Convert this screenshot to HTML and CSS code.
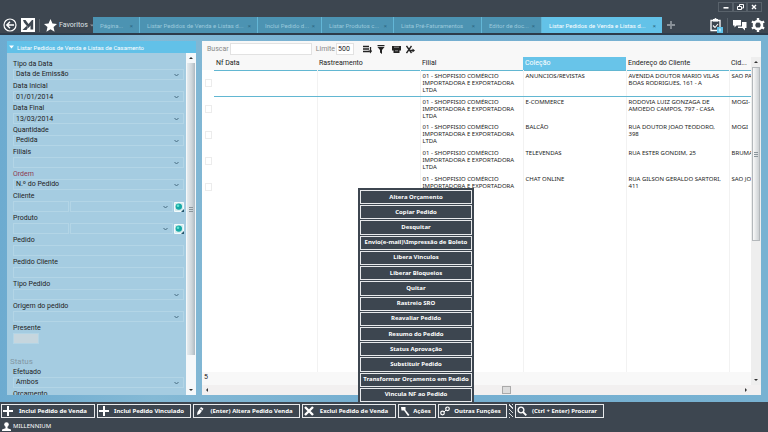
FILE: index.html
```
<!DOCTYPE html>
<html lang="pt-BR">
<head>
  <meta charset="UTF-8">
  <meta name="viewport" content="width=device-width, initial-scale=1.0">
  <title>Millennium</title>
  <link rel="stylesheet" href="styles.css">
</head>
<body>

<div class="titlebar">
  <button type="button" aria-label="Minimizar"><svg viewBox="0 0 14 8"><path d="M4.5 4.8h5" stroke-width="1.6"/></svg></button>
  <button type="button" aria-label="Restaurar"><svg viewBox="0 0 14 8"><path d="M6.5 3V1.5h4v3.500h-1.500M4.500 3.500h4v3h-4z" stroke-width="1"/></svg></button>
  <button type="button" aria-label="Fechar"><svg viewBox="0 0 14 8"><path d="M5 2l4 4M9 2L5 6" stroke-width="1.4"/></svg></button>
</div>

<header class="topbar">
  <button type="button" class="icon-btn" aria-label="Voltar">
    <svg width="14" height="14" viewBox="0 0 14 14"><circle cx="7" cy="7" r="6" fill="none" stroke="#fff" stroke-width="1.2"/><path d="M11 7H4M7 3.800L3.800 7 7 10.200" fill="none" stroke="#fff" stroke-width="1.400"/></svg>
  </button>
  <svg class="logo" width="14" height="14" viewBox="0 0 14 14"><path d="M0 0h14v14H0z" fill="#fff"/><path d="M2 2h2.500l3 4L11 2h1.200v9.500H9.500V7.500L7.500 10 3 4.500z" fill="#3d4650"/><path d="M1.500 12L5.500 8l1.500 1.800L5.500 12z" fill="#3d4650"/></svg>
  <button type="button" class="favoritos">
    <svg width="13" height="13" viewBox="0 0 24 24"><path d="M12 0l3.600 8.300 8.400.7-6.400 5.900 1.900 8.600L12 18.900l-7.500 4.600 1.900-8.600L0 9l8.400-.7z" fill="#fff"/></svg>
    Favoritos
    <svg width="4" height="3" viewBox="0 0 4 3"><path d="M0 .5h4L2 2.500z" fill="#8b949c"/></svg>
  </button>
  <nav class="tabs">
    <div class="tab tab-1"><a href="#">Página...</a><button type="button" aria-label="Fechar aba">×</button></div>
    <div class="tab tab-2"><a href="#">Listar Pedidos de Venda e Listas d...</a><button type="button" aria-label="Fechar aba">×</button></div>
    <div class="tab tab-3"><a href="#">Inclui Pedido d...</a><button type="button" aria-label="Fechar aba">×</button></div>
    <div class="tab tab-4"><a href="#">Listar Produtos c...</a><button type="button" aria-label="Fechar aba">×</button></div>
    <div class="tab tab-5"><a href="#">Lista Pré-Faturamentos</a><button type="button" aria-label="Fechar aba">×</button></div>
    <div class="tab tab-6"><a href="#">Editor de doc...</a><button type="button" aria-label="Fechar aba">×</button></div>
    <div class="tab tab-7 active"><a href="#">Listar Pedidos de Venda e Listas d...</a><button type="button" aria-label="Fechar aba">×</button></div>
  </nav>
  <button type="button" class="icon-btn" aria-label="Nova aba">
    <svg width="8" height="8" viewBox="0 0 8 8"><path d="M4 0v8M0 4h8" stroke="#8b9299" stroke-width="1.800"/></svg>
  </button>
  <div class="tools">
    <button type="button" class="icon-btn tasks" aria-label="Tarefas">
      <svg width="15" height="15" viewBox="0 0 15 15"><path d="M2 2.500h9v10H2z" fill="none" stroke="#fff" stroke-width="1.300"/><path d="M4 1h1.500a1 1 0 0 1 2 0H9v2.500H4z" fill="#fff"/><path d="M4 7.500l2 2 3-3.500" fill="none" stroke="#fff" stroke-width="1.100"/><path d="M8 9h6v6H8z" fill="#5fc3ea"/><path d="M11 10.500v3" stroke="#fff"/></svg>
    </button>
    <button type="button" class="icon-btn" aria-label="Mensagens">
      <svg width="15" height="12" viewBox="0 0 15 12"><path d="M1 1h8v5.500H4.500L2.500 8.500v-2H1z" fill="#fff"/><path d="M10 3h4.500v6H13v2.500L10.500 9H6V7.500h4z" fill="#fff"/></svg>
    </button>
    <button type="button" class="icon-btn" aria-label="Configurações">
      <svg width="14" height="14" viewBox="0 0 14 14"><circle cx="7" cy="7" r="4" fill="none" stroke="#fff" stroke-width="2.600"/><path d="M5.800 0h2.400v14H5.800z M0.300 4.500l1.200-2.100 12.200 7-1.200 2.100z M12.500 2.400l1.200 2.100-12.200 7-1.200-2.100z" fill="#fff"/><circle cx="7" cy="7" r="2.600" fill="#3d4650"/></svg>
    </button>
  </div>
</header>

<main class="workspace">
  <aside class="sidebar">
    <h1 class="sidebar-title"><svg width="5" height="4" viewBox="0 0 5 4"><path d="M0 .5h5L2.500 3.500z" fill="#fff"/></svg>Listar Pedidos de Venda e Listas de Casamento</h1>
    <div class="sidebar-body">
      <form class="filters">
        <div class="field"><label for="tipoData">Tipo da Data</label><select id="tipoData"><option>Data de Emissão</option></select></div>
        <div class="field"><label for="dataInicial">Data Inicial</label><input class="drop" type="text" id="dataInicial" value="01/01/2014"></div>
        <div class="field"><label for="dataFinal">Data Final</label><input class="drop" type="text" id="dataFinal" value="13/03/2014"></div>
        <div class="field"><label for="quantidade">Quantidade</label><select id="quantidade"><option>Pedida</option></select></div>
        <div class="field"><label for="filiais">Filiais</label><select id="filiais"><option></option></select></div>
        <div class="field required"><label for="ordem">Ordem</label><select id="ordem"><option>N.º do Pedido</option></select></div>
        <div class="field">
          <label for="cliente">Cliente</label>
          <div class="lookup">
            <input class="code" type="text" id="cliente"><select aria-label="Nome do cliente"><option></option></select>
            <button type="button" aria-label="Buscar cliente"><svg width="10" height="10" viewBox="0 0 10 10"><path d="M.5.5h9v9h-9z" fill="#d5ecef" stroke="#f3fafc"/><circle cx="4.800" cy="4.600" r="3.200" fill="#16a9a5"/><circle cx="4" cy="3.800" r="1.300" fill="#63e3ce"/><path d="M7 10h3V7z" fill="#25566c"/></svg></button>
          </div>
        </div>
        <div class="field">
          <label for="produto">Produto</label>
          <div class="lookup">
            <input class="code" type="text" id="produto"><select aria-label="Nome do produto"><option></option></select>
            <button type="button" aria-label="Buscar produto"><svg width="10" height="10" viewBox="0 0 10 10"><path d="M.5.5h9v9h-9z" fill="#d5ecef" stroke="#f3fafc"/><circle cx="4.800" cy="4.600" r="3.200" fill="#16a9a5"/><circle cx="4" cy="3.800" r="1.300" fill="#63e3ce"/><path d="M7 10h3V7z" fill="#25566c"/></svg></button>
          </div>
        </div>
        <div class="field"><label for="pedido">Pedido</label><input type="text" id="pedido"></div>
        <div class="field"><label for="pedidoCliente">Pedido Cliente</label><input type="text" id="pedidoCliente"></div>
        <div class="field"><label for="tipoPedido">Tipo Pedido</label><select id="tipoPedido"><option></option></select></div>
        <div class="field"><label for="origem">Origem do pedido</label><select id="origem"><option></option></select></div>
        <div class="field"><label for="presente">Presente</label><input class="short" type="text" id="presente"></div>
        <h2>Status</h2>
        <div class="field"><label for="efetuado">Efetuado</label><select id="efetuado"><option>Ambos</option></select></div>
        <div class="field"><label for="orcamento">Orçamento</label></div>
      </form>
      <div class="vscroll">
        <span class="arrow up"></span>
        <span class="thumb"></span>
        <span class="arrow down"></span>
      </div>
    </div>
  </aside>

  <section class="panel">
    <div class="searchbar">
      <label for="buscar">Buscar</label>
      <input class="buscar" type="text" id="buscar">
      <label for="limite">Limite</label>
      <input class="limite" type="text" id="limite" value="500">
      <button type="button" class="icon-btn" aria-label="Ordenar"><svg width="9" height="9" viewBox="0 0 9 9"><path d="M0 1.500h6M0 4h6M0 6.500h6M7.500 2v5" stroke="#222" stroke-width="1.300"/><path d="M5.500 5.500h3.500v.500L7.300 8.500z" fill="#222"/></svg></button>
      <button type="button" class="icon-btn" aria-label="Filtrar"><svg width="8" height="9" viewBox="0 0 8 9"><path d="M.5 0h7v1.300h-7zM.5 2h7L5 5v4L3 7.500V5z" fill="#222"/></svg></button>
      <button type="button" class="icon-btn print" aria-label="Imprimir"><svg width="9" height="9" viewBox="0 0 9 9"><path d="M0 1h9v4.500H7.500V8h-6V5.500H0z" fill="#222"/><path d="M2 2.200h5M3 5.800h3" stroke="#aaa" stroke-width=".8"/></svg></button>
      <button type="button" class="icon-btn" aria-label="Exportar"><svg width="9" height="9" viewBox="0 0 9 9"><path d="M.5 1l5 7M5.500 1l-5 7M4 5.500h3" fill="none" stroke="#222" stroke-width="1.300"/><path d="M6.500 3.500L9 5.500l-2.500 2z" fill="#222"/></svg></button>
    </div>
    <div class="grid-area">
      <div class="grid-wrap">
        <table class="grid">
          <colgroup><col class="c-check"><col class="c-data"><col class="c-data"><col class="c-data"><col class="c-data"><col class="c-data"><col></colgroup>
          <thead>
            <tr><th></th><th>Nf Data</th><th>Rastreamento</th><th>Filial</th><th class="sorted">Coleção</th><th>Endereço do Cliente</th><th>Cid...</th></tr>
          </thead>
          <tbody>
            <tr class="selected"><td><input type="checkbox" aria-label="Selecionar linha 1"></td><td></td><td></td><td>01 - SHOPFISIO COMÉRCIO<br>IMPORTADORA E EXPORTADORA<br>LTDA</td><td>ANUNCIOS/REVISTAS</td><td>AVENIDA DOUTOR MARIO VILAS<br>BOAS RODRIGUES, 161 - A</td><td>SAO PA</td></tr>
            <tr><td><input type="checkbox" aria-label="Selecionar linha 2"></td><td></td><td></td><td>01 - SHOPFISIO COMÉRCIO<br>IMPORTADORA E EXPORTADORA<br>LTDA</td><td>E-COMMERCE</td><td>RODOVIA LUIZ GONZAGA DE<br>AMOEDO CAMPOS, 797 - CASA</td><td>MOGI-</td></tr>
            <tr><td><input type="checkbox" aria-label="Selecionar linha 3"></td><td></td><td></td><td>01 - SHOPFISIO COMÉRCIO<br>IMPORTADORA E EXPORTADORA<br>LTDA</td><td>BALCÃO</td><td>RUA DOUTOR JOAO TEODORO,<br>398</td><td>MOGI</td></tr>
            <tr><td><input type="checkbox" aria-label="Selecionar linha 4"></td><td></td><td></td><td>01 - SHOPFISIO COMÉRCIO<br>IMPORTADORA E EXPORTADORA<br>LTDA</td><td>TELEVENDAS</td><td>RUA ESTER GONDIM, 25</td><td>BRUMA</td></tr>
            <tr><td><input type="checkbox" aria-label="Selecionar linha 5"></td><td></td><td></td><td>01 - SHOPFISIO COMÉRCIO<br>IMPORTADORA E EXPORTADORA</td><td>CHAT ONLINE</td><td>RUA GILSON GERALDO SARTORI,<br>411</td><td>SAO JO</td></tr>
            <tr class="filler"><td></td><td></td><td></td><td></td><td></td><td></td><td></td></tr>
          </tbody>
        </table>
        <div class="count">5</div>
      </div>
      <div class="vscroll light">
        <span class="arrow up"></span>
        <span class="thumb"></span>
        <span class="arrow down"></span>
      </div>
    </div>
    <div class="hscroll">
      <span class="arrow left"></span>
      <span class="hthumb"></span>
      <span class="arrow right"></span>
    </div>
  </section>
</main>

<footer class="footer">
  <div class="actions">
    <button type="button" class="act w-lg"><svg width="10" height="10" viewBox="0 0 10 10"><path d="M5 0v10M0 5h10" stroke="#fff" stroke-width="2"/></svg><span>Inclui Pedido de Venda</span></button>
    <button type="button" class="act w-lg"><svg width="10" height="10" viewBox="0 0 10 10"><path d="M5 0v10M0 5h10" stroke="#fff" stroke-width="2"/></svg><span>Inclui Pedido Vinculado</span></button>
    <button type="button" class="act w-xl"><svg width="10" height="10" viewBox="0 0 10 10"><path d="M2 9l.5-3 3.500-5 2.500 1.700-3.600 5z" fill="#fff"/><path d="M4.800 2.800l2.500 1.700" stroke="#3d4650" stroke-width=".8"/></svg><span>(Enter) Altera Pedido Venda</span></button>
    <button type="button" class="act w-lg"><svg width="10" height="10" viewBox="0 0 10 10"><path d="M1 1l8 8M9 1L1 9" stroke="#fff" stroke-width="2.400"/></svg><span>Exclui Pedido de Venda</span></button>
    <div class="dropdown">
      <button type="button" class="act w-sm"><svg width="10" height="10" viewBox="0 0 10 10"><path d="M1 1h4.500v3L9.500 9 8 10 4 4.500H1.500z" fill="#fff"/></svg><span>Ações</span></button>
      <div class="menu">
        <button type="button">Altera Orçamento</button>
        <button type="button">Copiar Pedido</button>
        <button type="button">Desquitar</button>
        <button type="button">Envio(e-mail)\Impressão de Boleto</button>
        <button type="button">Libera Vinculos</button>
        <button type="button">Liberar Bloqueios</button>
        <button type="button">Quitar</button>
        <button type="button">Rastreio SRO</button>
        <button type="button">Reavaliar Pedido</button>
        <button type="button">Resumo do Pedido</button>
        <button type="button">Status Aprovação</button>
        <button type="button">Substituir Pedido</button>
        <button type="button">Transformar Orçamento em Pedido</button>
        <button type="button">Vincula NF ao Pedido</button>
      </div>
    </div>
    <button type="button" class="act w-md"><svg width="10" height="10" viewBox="0 0 10 10"><circle cx="2.500" cy="7" r="1.800" fill="none" stroke="#fff" stroke-width="1.200"/><circle cx="7.500" cy="2.800" r="1.800" fill="none" stroke="#fff" stroke-width="1.200"/><path d="M4 6l2-2" stroke="#fff"/></svg><span>Outras Funções</span></button>
    <span class="grip"></span>
    <button type="button" class="act w-find"><svg width="10" height="10" viewBox="0 0 10 10"><circle cx="4" cy="4" r="2.900" fill="none" stroke="#fff" stroke-width="1.400"/><path d="M6 6l3.300 3.300" stroke="#fff" stroke-width="1.800"/></svg><span>(Ctrl + Enter) Procurar</span></button>
  </div>
  <div class="user"><svg width="9" height="9" viewBox="0 0 9 9"><circle cx="4.500" cy="2.500" r="2.300" fill="#fff"/><path d="M3.500 4h2v2.200L9 7.500V9H0V7.500l3.500-1.300z" fill="#fff"/></svg>MILLENNIUM</div>
</footer>

</body>
</html>
```
FILE: styles.css
```
* {
  box-sizing: border-box;
}

body {
  margin: 0;
  height: 100vh;
  display: flex;
  flex-direction: column;
  overflow: hidden;
  background: #78b0d0;
  color: #222;
  font-family: Roboto, "Noto Sans", sans-serif;
  font-size: 7px;
  line-height: 11px;
}

button, input, select {
  font: inherit;
  color: inherit;
  margin: 0;
  padding: 0;
  border: 0;
  border-radius: 0;
  background: none;
}

svg {
  display: block;
  flex: none;
}

/* window buttons */
.titlebar {
  flex: none;
  height: 17px;
  background: #3d4650;
  display: flex;
  justify-content: flex-end;
  align-items: flex-start;
  padding: 3px 7px 0 0;
}

.titlebar button {
  width: 14px;
  height: 8px;
  outline: 1px solid #59626b;
}

.titlebar path {
  fill: none;
  stroke: #fff;
}

/* top bar */
.topbar {
  flex: none;
  height: 18px;
  background: #3d4650;
  border-bottom: 2px solid #2c3b4a;
  display: flex;
  align-items: center;
  padding: 0 3px;
}

.logo {
  margin: 0 4px;
}

.favoritos {
  display: flex;
  align-items: center;
  gap: 2px;
  width: 54px;
  padding-left: 4px;
  border-left: 1px solid #59626b;
  color: #dfe3e6;
  white-space: nowrap;
}

.tabs {
  display: flex;
  align-self: stretch;
  gap: 1px;
  margin-right: 5px;
  background: #63b6d6;
  font-size: 6px;
}

.tab {
  display: flex;
  align-items: center;
  justify-content: space-between;
  padding: 0 6px 0 7px;
  background: #4c93b2;
  color: #9bc9dc;
}

.tab a {
  color: inherit;
  text-decoration: none;
  white-space: nowrap;
}

.tab button {
  color: #2c6885;
}

.tab.active {
  background: #63c2e8;
  color: #fff;
}

.tab-1 { width: 46px; }
.tab-2 { width: 117px; }
.tab-3 { width: 63px; }
.tab-4 { width: 71px; }
.tab-5 { width: 87px; }
.tab-6 { width: 59px; }
.tab-7 { width: 120px; }

.tools {
  display: flex;
  align-items: center;
  gap: 4px;
  margin-left: auto;
}

.tasks {
  padding-right: 3px;
  border-right: 1px solid #59626b;
}

/* main area */
.workspace {
  flex: 1;
  min-height: 0;
  display: flex;
  gap: 6px;
  padding: 6px 7px 7px;
  background: linear-gradient(90deg, #6dabd0, #84b9d5 20%, #74aed0 50%, #78b2d2);
}

.sidebar {
  flex: none;
  width: 189px;
  display: flex;
  flex-direction: column;
}

.sidebar-title {
  flex: none;
  display: flex;
  align-items: center;
  gap: 3px;
  height: 12px;
  margin: 0;
  padding-left: 2px;
  background: #62c1e8;
  color: #fff;
  font-size: 6px;
  font-weight: normal;
  white-space: nowrap;
}

.sidebar-body {
  flex: 1;
  min-height: 0;
  display: flex;
  background: #a5cce1;
}

.filters {
  flex: 1;
  padding: 6px 2px 0 6px;
  overflow: hidden;
}

.field {
  display: flex;
  flex-direction: column;
  height: 22px;
}

.field label {
  height: 10px;
  line-height: 10px;
}

.required label {
  color: #8d3a50;
}

.field input, .field select {
  width: 100%;
  height: 11px;
  padding: 0 2px;
  border: 1px solid #b3d5e6;
  line-height: 9px;
}

select, input.drop {
  appearance: none;
  background: url("data:image/svg+xml,%3Csvg xmlns='http://www.w3.org/2000/svg' width='5' height='4'%3E%3Cpath d='M.5 1l2 2 2-2' fill='none' stroke='%23466a80'/%3E%3C/svg%3E") no-repeat right 4px center;
}

.lookup {
  display: flex;
  align-items: center;
  gap: 1px;
}

.lookup .code {
  flex: none;
  width: 56px;
}

.lookup select {
  flex: 1;
  min-width: 0;
}

.field .short {
  width: 26px;
  background: #c6d6de;
}

.filters h2 {
  margin: 11px 0 0 -3px;
  color: #8397a3;
  font-size: 8px;
  line-height: 11px;
  font-weight: normal;
}

/* scrollbars */
.vscroll {
  flex: none;
  width: 10px;
  display: flex;
  flex-direction: column;
  background: #f5f8fa;
}

.vscroll .thumb {
  flex: 1;
  display: grid;
  place-items: center;
  margin: 0 1px 30px;
  background: linear-gradient(90deg, #e6ecef, #cdd5da 60%, #aebac2);
}

.vscroll .thumb::before {
  content: "";
  width: 4px;
  height: 5px;
  background: repeating-linear-gradient(#8b959b 0 1px, transparent 1px 2px);
}

.arrow {
  flex: none;
  width: 10px;
  height: 10px;
  display: grid;
  place-items: center;
}

.arrow::before {
  content: "";
  border: 2px solid transparent;
  border-top: 0;
  border-bottom-color: #333;
}

.arrow.down { transform: rotate(180deg); }
.arrow.left { transform: rotate(-90deg); }
.arrow.right { transform: rotate(90deg); }

.light {
  background: #eee;
}

.light .thumb {
  margin-bottom: 134px;
  border: 1px solid #b4b8bb;
  background: linear-gradient(90deg, #fafafa, #ccd0d3);
}

/* list panel */
.panel {
  flex: 1;
  min-width: 0;
  display: flex;
  flex-direction: column;
  background: #f8f8f8;
}

.searchbar {
  flex: none;
  display: flex;
  align-items: center;
  height: 16px;
  padding-left: 5px;
  color: #888;
}

.searchbar input {
  height: 12px;
  margin: 0 4px 0 1px;
  padding: 0 2px;
  border: 1px solid #e2e2e2;
  background: #fff;
  color: #222;
}

.searchbar .buscar {
  width: 82px;
}

.searchbar .limite {
  width: 18px;
  padding: 0 1px;
}

.searchbar .icon-btn {
  margin-left: 5px;
}

.searchbar .print {
  margin-left: 7px;
}

.grid-area {
  flex: 1;
  min-height: 0;
  display: flex;
}

.grid-wrap {
  flex: 1;
  min-width: 0;
  display: flex;
  flex-direction: column;
  overflow: hidden;
}

.grid {
  flex: 1;
  width: 100%;
  table-layout: fixed;
  border-collapse: collapse;
  background: #fff;
}

.c-check { width: 12px; }
.c-data { width: 103px; }

.grid th {
  height: 13px;
  padding: 0 2px;
  background: #f8f8f8;
  font-weight: normal;
  text-align: left;
  line-height: 11px;
}

.grid th.sorted {
  background: #68c4e9;
  color: #fff;
}

.grid td {
  height: 26px;
  padding: 2px 0 0 2px;
  border-right: 1px solid #f2f2f2;
  vertical-align: top;
  font-family: "Noto Sans", sans-serif;
  font-size: 6px;
  line-height: 7px;
  white-space: nowrap;
}

.grid td:last-child {
  border-right: 0;
}

.grid td:first-child {
  padding: 9px 0 0 3px;
  border: 0;
}

.grid .selected td:not(:first-child) {
  border-top: 1px solid #62b7d2;
  border-bottom: 1px solid #62b7d2;
}

.grid .filler td {
  height: auto;
}

.grid input {
  display: block;
  appearance: none;
  width: 7px;
  height: 8px;
  border: 1px solid #ececec;
}

.count {
  flex: none;
  height: 13px;
  padding-left: 2px;
}

.hscroll {
  flex: none;
  display: flex;
  justify-content: space-between;
  align-items: center;
  height: 10px;
  padding-right: 10px;
  background: #f2f0f0;
}

.hthumb {
  width: 9px;
  height: 8px;
  margin-left: 60px;
  border: 1px solid #aaa;
  background: #ddd;
}

/* footer */
.footer {
  flex: none;
  height: 30px;
  background: #3d4650;
  color: #fff;
  font-family: "Noto Sans", sans-serif;
}

.actions {
  display: flex;
  gap: 2px;
  padding: 2px 1px 0;
}

.act {
  display: flex;
  align-items: center;
  height: 14px;
  padding: 0 1px;
  border: 1px solid #e8eaec;
  font-size: 6px;
  font-weight: bold;
  white-space: nowrap;
}

.act span {
  flex: 1;
  text-align: center;
}

.w-sm { width: 38px; }
.w-md { width: 69px; }
.w-find { width: 89px; }
.w-lg { width: 94px; }
.w-xl { width: 107px; }

.grip {
  width: 4px;
  background: repeating-linear-gradient(45deg, #dde0e2 0 1px, #3d4650 1px 3px);
}

.dropdown {
  position: relative;
}

/* opens upwards over the list */
.menu {
  position: absolute;
  left: -40px;
  bottom: 14px;
  width: 116px;
  height: 216px;
  display: grid;
  grid-auto-rows: 1fr;
  gap: 1px;
  padding: 2px;
  background: #3d4650;
}

.menu button {
  border: 1px solid #e8eaec;
  font-size: 6px;
  line-height: 11px;
  font-weight: bold;
  white-space: nowrap;
}

.user {
  display: flex;
  align-items: center;
  gap: 2px;
  height: 14px;
  padding: 3px 2px 0;
  font-size: 6px;
}
```
